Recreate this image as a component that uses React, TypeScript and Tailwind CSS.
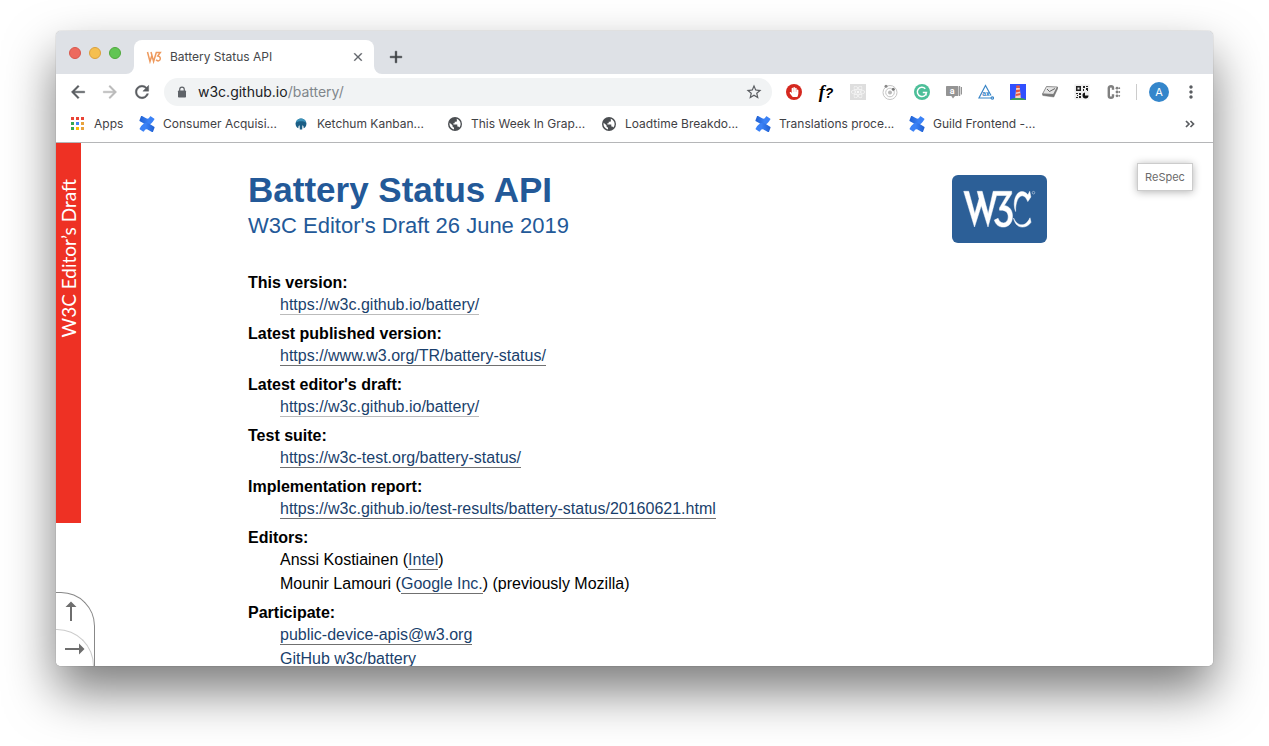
import type { ReactNode } from "react";
import { MdMoreVert, MdStarBorder } from "react-icons/md";
import { FaHandPaper, FaReact } from "react-icons/fa";

const glyphs = {
  back: "M20 11H7.830l5.590-5.590L12 4l-8 8 8 8 1.410-1.410L7.830 13H20v-2z",
  forward: "M12 4l-1.410 1.410L16.170 11H4v2h12.170l-5.580 5.590L12 20l8-8z",
  reload:
    "M17.650 6.350C16.200 4.900 14.210 4 12 4c-4.420 0-7.990 3.580-7.990 8s3.570 8 7.990 8c3.730 0 6.840-2.550 7.730-6h-2.080c-.820 2.330-3.040 4-5.650 4-3.310 0-6-2.690-6-6s2.690-6 6-6c1.660 0 3.140.690 4.220 1.780L13 11h7V4l-2.350 2.350z",
  close:
    "M19 6.410L17.590 5 12 10.590 6.410 5 5 6.410 10.590 12 5 17.590 6.410 19 12 13.410 17.590 19 19 17.590 13.410 12z",
  add: "M19 13h-6v6h-2v-6H5v-2h6V5h2v6h6v2z",
};

function Glyph({ name, className }: { name: keyof typeof glyphs; className: string }) {
  return (
    <svg viewBox="0 0 24 24" className={className} fill="currentColor" stroke="currentColor" strokeWidth="0.500" aria-hidden="true">
      <path d={glyphs[name]} />
    </svg>
  );
}

function ConfluenceIcon() {
  return (
    <svg viewBox="0 0 16 16" className="size-4 shrink-0" aria-hidden="true">
      <defs>
        <linearGradient id="cfTop" x1="0" y1="0" x2="1" y2="0">
          <stop offset="0" stopColor="#1f5fd0" />
          <stop offset="0.6" stopColor="#3b82f6" />
        </linearGradient>
        <linearGradient id="cfBottom" x1="0" y1="0" x2="1" y2="0">
          <stop offset="0.4" stopColor="#3b82f6" />
          <stop offset="1" stopColor="#1f5fd0" />
        </linearGradient>
      </defs>
      <path
        d="M2 .3.500 4.200c-.2.500 0 .9.400 1.100C4.300 7.200 6.200 8.900 8.600 8.900c2.700 0 4.700-1.900 6.700-5.300.3-.5.100-.9-.3-1.200L12 .5c-.5-.3-.9-.1-1.100.3C9.700 2.700 8.800 3 7.100 2.300L3.100.1C2.600-.2 2.200-.1 2 .3Z"
        fill="url(#cfTop)"
      />
      <path
        d="m14 15.700 1.500-3.900c.2-.5 0-.9-.4-1.100C11.700 8.800 9.800 7.100 7.400 7.100 4.700 7.100 2.700 9 .7 12.400c-.3.5-.1.9.3 1.200l3 1.900c.5.3.9.1 1.100-.3 1.200-1.900 2.100-2.200 3.800-1.500l4 2.200c.5.3.9.2 1.100-.2Z"
        fill="url(#cfBottom)"
      />
    </svg>
  );
}

function KetchumIcon() {
  return (
    <svg viewBox="0 0 16 16" className="size-4 shrink-0" aria-hidden="true">
      <path d="M2.700 9A5.400 5.400 0 1 1 13.300 9c-.3 1.500-1.300 2.700-2.600 3.300l-.3-2.300-1-.8-.2 4.300H6.800l-.2-4.300-1 .8-.3 2.300C4 11.700 3 10.500 2.700 9Z" fill="#1b5e85" />
      <path d="M2.800 6.500A5.400 5.400 0 0 1 13.200 6.500C11.600 5.500 10 5.200 8 5.200s-3.600.3-5.200 1.300Z" fill="#3d93ba" />
    </svg>
  );
}

function GlobeIcon() {
  return (
    <svg viewBox="0 0 16 16" className="size-4 shrink-0" aria-hidden="true">
      <circle cx="8" cy="8" r="7" fill="#4b4e52" />
      <path d="M2.600 6.800 5.500 9.300v1.200l1.500 1.300v1.800A5.700 5.700 0 0 1 2.600 6.800Z" fill="#fff" />
      <path d="M9.700 2.700c2.200.7 3.800 2.700 3.900 5 .1 1.500-.4 2.800-1.300 3.800-.2-.7-.7-1.100-1.400-1.100h-.6V8.600H6.400V7.200h1.300V5.800h1.300c.5 0 .9-.4.900-1Z" fill="#fff" />
    </svg>
  );
}

function AppsIcon() {
  const colors = ["#ea4335", "#ea4335", "#ea4335", "#34a853", "#4285f4", "#e8a33d", "#34a853", "#fbbc05", "#e8a33d"];
  return (
    <svg viewBox="0 0 16 16" className="size-4 shrink-0" aria-hidden="true">
      {colors.map((c, i) => (
        <rect key={i} x={1 + (i % 3) * 5} y={1 + Math.floor(i / 3) * 5} width="3" height="3" fill={c} />
      ))}
    </svg>
  );
}

function W3Favicon() {
  return (
    <svg viewBox="0 0 16 16" className="size-4 shrink-0" fill="none" stroke="#ee9a5e" strokeWidth="1.500" aria-hidden="true">
      <path d="M1.500 3 4 12.500 6 6M5 3l2.600 9.500L10.300 3.500h4L11.800 7c1.800.2 2.700 1.300 2.500 3-.2 1.900-2.700 2.700-4.200.8" />
    </svg>
  );
}

const extensions: { name: string; icon: ReactNode }[] = [
  {
    name: "AdBlock",
    icon: (
      <span className="grid size-4 place-items-center rounded-full bg-[#d5281f] text-white">
        <FaHandPaper className="size-2.5" />
      </span>
    ),
  },
  {
    name: "Font finder",
    icon: (
      <span className="font-['Liberation_Serif',serif] text-[18px] leading-4 font-bold text-black">
        <i>f</i>
        <span className="font-['Liberation_Sans',sans-serif] text-[14px] italic">?</span>
      </span>
    ),
  },
  {
    name: "React developer tools",
    icon: (
      <span className="grid size-4 place-items-center bg-[#dedede] text-[#f8f8f8]">
        <FaReact className="size-3.5" />
      </span>
    ),
  },
  {
    name: "Orbit",
    icon: (
      <svg viewBox="0 0 16 16" className="size-4" fill="none" stroke="#c4c4c4">
        <circle cx="8" cy="8.500" r="7" />
        <circle cx="8" cy="8.500" r="4.300" />
        <circle cx="8" cy="8.500" r="2" fill="#b8b8b8" stroke="none" />
        <circle cx="11.300" cy="5.300" r="1.500" fill="#777" stroke="none" />
        <circle cx="4" cy="2.300" r="1.500" fill="#888" stroke="none" />
      </svg>
    ),
  },
  {
    name: "Grammarly",
    icon: (
      <svg viewBox="0 0 16 16" className="size-4" fill="none" stroke="#fff" strokeWidth="1.500">
        <circle cx="8" cy="8" r="8" fill="#4dbf99" stroke="none" />
        <path d="M11.300 4.800a4.600 4.600 0 1 0 1.200 3.700H8.800M12 8.500v2.900" />
      </svg>
    ),
  },
  {
    name: "Alt text",
    icon: (
      <svg viewBox="0 0 16 16" className="size-4" fill="#949494">
        <path d="M1 2h10.500c.6 0 1 .4 1 1v8c0 .6-.4 1-1 1H9l-2 2.500L5.300 12H1c-.6 0-1-.4-1-1V3c0-.6.4-1 1-1Z" />
        <path d="M13 2h1.200v10H13zM14.800 3H16v7.500h-1.200z" />
        <text x="6.200" y="9.800" fontSize="9" fontWeight="700" textAnchor="middle" fill="#fff" fontFamily="Roboto, sans-serif">a</text>
      </svg>
    ),
  },
  {
    name: "axe",
    icon: (
      <svg viewBox="0 0 16 16" className="size-4" fill="none" stroke="#3c87c8" strokeWidth="1.200">
        <path d="M13.500 14H1L7.500 1.500 13 11.500" />
        <circle cx="14.300" cy="14" r="1.200" />
        <text x="7.800" y="12" fontSize="7" fontWeight="700" textAnchor="middle" fill="#3c87c8" stroke="none" fontFamily="Roboto, sans-serif">ax</text>
      </svg>
    ),
  },
  {
    name: "Lighthouse",
    icon: (
      <svg viewBox="0 0 16 16" className="size-4">
        <path d="M0 0h16v16H0z" fill="#304ffe" />
        <path d="M0 16c2-3 14-3 16 0Z" fill="#3f9d55" />
        <path d="M6.200 4h3.600l1 10H5.200Z" fill="#f6d2c4" />
        <path d="M6.200 1.500h3.600V4H6.200zM6 6l4-.5.200 2L5.800 8.500ZM5.700 10l4.700-1 .2 2-5 1Z" fill="#e5563d" />
      </svg>
    ),
  },
  {
    name: "Mail checker",
    icon: (
      <svg viewBox="0 0 16 16" className="size-4" fill="#e4e4e4" stroke="#777" strokeWidth="0.800" strokeLinejoin="round">
        <path d="m4.500 2.500 11 .5-4 7.500L.5 10Z" />
        <path d="m.5 10 .3 1.500L11.800 13l3.900-8.500-.2-1.500-4 7.500Z" fill="#777" strokeWidth="0.500" />
        <path d="m5 5 2.500 2.500 5.500-3" fill="none" stroke="#444" />
      </svg>
    ),
  },
  {
    name: "QR code",
    icon: (
      <svg viewBox="0 0 16 16" className="size-4">
        <path d="M.5.5h15v15H.5z" fill="#eee" />
        <path d="M2 2h5v5H2zM9 2h2v2H9zM12 2h2v1h-2zM9 5h1v2H9zM12 4h2v3h-1V6h-1zM2 9h2v1H2zM5 9h2v2H5zM3 11h1v1H3zM2 13h2v1H2zM5 12h2v2H5z" fill="#222" />
        <path d="M3.500 3.500h2v2h-2z" fill="#eee" />
        <path d="M11 8.500v3h3.500a3 3 0 1 1-3.500-3Z" fill="#111" />
      </svg>
    ),
  },
  {
    name: "Cookie editor",
    icon: (
      <svg viewBox="0 0 16 16" className="size-4" fill="#808080" stroke="none">
        <path d="M7 5.800V4c0-1.100-.7-1.700-2-1.700S2.800 2.900 2.800 4v8c0 1.100.9 1.700 2.200 1.700s2-.6 2-1.700v-1.800" fill="none" stroke="#808080" strokeWidth="2.400" />
        <circle cx="11" cy="4.200" r="1.400" />
        <circle cx="11" cy="8" r="1.400" />
        <circle cx="11" cy="11.800" r="1.400" />
        <circle cx="13.300" cy="4.200" r="0.900" />
        <circle cx="13.300" cy="8" r="0.900" />
        <circle cx="13.300" cy="11.800" r="0.900" />
      </svg>
    ),
  },
];

const bookmarks: { label: string; icon: ReactNode }[] = [
  { label: "Consumer Acquisi...", icon: <ConfluenceIcon /> },
  { label: "Ketchum Kanban...", icon: <KetchumIcon /> },
  { label: "This Week In Grap...", icon: <GlobeIcon /> },
  { label: "Loadtime Breakdo...", icon: <GlobeIcon /> },
  { label: "Translations proce...", icon: <ConfluenceIcon /> },
  { label: "Guild Frontend -...", icon: <ConfluenceIcon /> },
];

function TabStrip() {
  return (
    <div className="flex h-[43px] shrink-0 items-end bg-[#dee1e6]">
      <div className="flex w-[78px] shrink-0 gap-2 self-center pl-[13px]">
        <button aria-label="Close window" className="size-3 rounded-full border border-[#d8574c] bg-[#ed6a5e]" />
        <button aria-label="Minimize window" className="size-3 rounded-full border border-[#dba03c] bg-[#f5bf4f]" />
        <button aria-label="Zoom window" className="size-3 rounded-full border border-[#4fa83c] bg-[#61c554]" />
      </div>
      <div className="relative flex h-[34px] w-60 items-center rounded-t-lg bg-white pr-2 pl-3">
        <svg viewBox="0 0 8 8" className="absolute bottom-0 -left-2 size-2" aria-hidden="true">
          <path d="M8 0v8H0a8 8 0 0 0 8-8Z" fill="#fff" />
        </svg>
        <svg viewBox="0 0 8 8" className="absolute -right-2 bottom-0 size-2" aria-hidden="true">
          <path d="M0 0v8h8a8 8 0 0 1-8-8Z" fill="#fff" />
        </svg>
        <W3Favicon />
        <span className="ml-2 flex-1 text-[12px] text-[#45474a]">Battery Status API</span>
        <button aria-label="Close tab" className="grid size-4 place-items-center text-[#5f6368]">
          <Glyph name="close" className="size-3.5" />
        </button>
      </div>
      <button aria-label="New tab" className="ml-2 grid h-[34px] w-7 place-items-center text-[#3c4043]">
        <Glyph name="add" className="size-5" />
      </button>
    </div>
  );
}

function Toolbar() {
  const nav = "grid h-9 w-8 shrink-0 place-items-center text-[#5a5d61]";
  return (
    <div className="flex h-9 shrink-0 items-center px-1.5">
      <button aria-label="Back" className={nav}>
        <Glyph name="back" className="size-5" />
      </button>
      <button aria-label="Forward" disabled className="grid h-9 w-8 shrink-0 place-items-center text-[#bababa]">
        <Glyph name="forward" className="size-5" />
      </button>
      <button aria-label="Reload" className={nav}>
        <Glyph name="reload" className="size-5" />
      </button>
      <div className="mx-1.5 flex h-7 min-w-0 flex-1 items-center rounded-full bg-[#f1f3f4] pr-[9px] pl-3">
        <svg viewBox="0 0 12 12" className="size-3 shrink-0" aria-hidden="true">
          <path d="M3.700 5V3.500a2.300 2.300 0 0 1 4.600 0V5" fill="none" stroke="#5f6368" strokeWidth="1.200" />
          <rect x="2" y="4.500" width="8" height="7" rx="0.800" fill="#5f6368" />
        </svg>
        <a href="#address" className="ml-2.5 flex-1 truncate pb-px text-[14px] text-[#202124]">
          w3c.github.io<span className="text-[#80868b]">/battery/</span>
        </a>
        <button aria-label="Bookmark this page" className="text-[#5a5d61]">
          <MdStarBorder className="size-[18px]" />
        </button>
      </div>
      {extensions.map((e) => (
        <button key={e.name} aria-label={e.name} className="grid h-9 w-8 shrink-0 place-items-center">{e.icon}</button>
      ))}
      <div className="mx-1.5 h-4 w-px shrink-0 bg-[#ccc]" />
      <button aria-label="Profile" className="grid h-9 w-8 shrink-0 place-items-center">
        <span className="grid size-5 place-items-center rounded-full bg-[#3486cb] text-[11px] text-white">A</span>
      </button>
      <button aria-label="Menu" className={nav}><MdMoreVert className="size-5" /></button>
    </div>
  );
}

function BookmarksBar() {
  return (
    <nav className="flex h-[33px] shrink-0 items-center border-b border-[#b5b6b8] pb-1 pl-3.5 text-[12px] text-[#3f4145]">
      <a href="#apps" className="flex w-[69px] shrink-0 items-center gap-2">
        <AppsIcon />
        Apps
      </a>
      {bookmarks.map((b) => (
        <a key={b.label} href="#bookmark" className="flex w-[154px] shrink-0 items-center gap-2 whitespace-nowrap">
          {b.icon}
          {b.label}
        </a>
      ))}
      <button aria-label="More bookmarks" className="mr-[18px] ml-auto text-[#5a5d61]">
        <svg viewBox="0 0 10 8" className="h-2 w-2.5" fill="none" stroke="currentColor" strokeWidth="1.700">
          <path d="m1 1 3 3-3 3M5.500 1l3 3-3 3" />
        </svg>
      </button>
    </nav>
  );
}

function DocLink({ children, faint = false }: { children: ReactNode; faint?: boolean }) {
  return (
    <a
      href="#link"
      className={faint ? "border-b border-[#bbb] pb-px text-[#1a3f6c]" : "border-b border-[#707070] pb-px text-[#1a3f6c]"}
    >
      {children}
    </a>
  );
}

const entries: { term: string; details: ReactNode[] }[] = [
  { term: "This version:", details: [<DocLink faint>https://w3c.github.io/battery/</DocLink>] },
  { term: "Latest published version:", details: [<DocLink>https://www.w3.org/TR/battery-status/</DocLink>] },
  { term: "Latest editor's draft:", details: [<DocLink faint>https://w3c.github.io/battery/</DocLink>] },
  { term: "Test suite:", details: [<DocLink>https://w3c-test.org/battery-status/</DocLink>] },
  {
    term: "Implementation report:",
    details: [<DocLink>https://w3c.github.io/test-results/battery-status/20160621.html</DocLink>],
  },
  {
    term: "Editors:",
    details: [
      <>Anssi Kostiainen (<DocLink>Intel</DocLink>)</>,
      <>Mounir Lamouri (<DocLink>Google Inc.</DocLink>) (previously Mozilla)</>,
    ],
  },
  {
    term: "Participate:",
    details: [<DocLink>public-device-apis@w3.org</DocLink>, <DocLink>GitHub w3c/battery</DocLink>],
  },
];

function W3CLogo() {
  return (
    <a href="#w3c" aria-label="W3C" className="h-[68px] w-[95px] shrink-0 rounded-md bg-[#2c5f97]">
      <svg viewBox="0 0 95 68" className="size-full" fill="#fff" stroke="#fff" strokeWidth="0.500">
        <path d="M11.700 16.300h5l6.100 22.500 4.300-15-1.900-7.500h5l6 22.500 5-22.500h18.500v2.500l-7.400 11.700c5.400.7 8.200 5.200 8.200 10.700 0 6.500-3.900 10.900-9.200 10.900-4.500 0-7.500-2.500-9-7l3.800-1.800c1 2.900 2.700 4.600 5.200 4.600 2.900 0 4.900-2.500 4.900-6 0-4.600-2.800-6.700-7.200-6.700h-1.500v-2.300l7.300-12.400H44.500L36 52l-6.700-21.500L22.500 52Z" />
        <path d="M77.700 16.300 78.900 22l-3.100 4.600c-1.400-3.500-3.200-5.800-5.600-5.800-3.800 0-6.900 6.600-6.600 15.700-3.600-9.300.2-19.900 6.300-19.900 2.600 0 4.600 1.300 6.100 3.200ZM61.500 43c2.200 4.700 5 6.800 8.400 6.800 3.300 0 5.700-2.200 8.100-7l1 4.500c-2 3-4.900 4.800-8.600 4.800-4.700 0-7.700-3.600-8.900-9.100Z" />
        <circle cx="81.500" cy="17.700" r="1.300" fill="none" strokeOpacity="0.600" strokeWidth="0.700" />
      </svg>
    </a>
  );
}

function Document() {
  return (
    <main className="relative flex min-h-0 flex-1 overflow-hidden bg-white font-['Liberation_Sans',Arial,sans-serif] text-[16px] text-black">
      <div className="mr-px flex h-[380px] w-[25px] shrink-0 justify-center bg-[#ee3124] pt-9">
        <span className="h-fit rotate-180 font-['Lato',sans-serif] text-[19px] leading-[25px] whitespace-nowrap text-white [writing-mode:vertical-rl]">
          W3C Editor’s Draft
        </span>
      </div>
      <div className="min-w-0 flex-1">
        <div className="mx-auto max-w-[799px] pt-7">
          <header className="mb-[23px] flex items-start justify-between">
            <div className="text-[#235998]">
              <h1 className="text-[35px] leading-[38px] font-bold">Battery Status API</h1>
              <h2 className="text-[22px] leading-[34px]">W3C Editor's Draft 26 June 2019</h2>
            </div>
            <div className="flex pt-1">
              <W3CLogo />
            </div>
          </header>
          <dl>
            {entries.map((entry) => (
              <div key={entry.term} className="pt-[7px]">
                <dt className="leading-5 font-bold">{entry.term}</dt>
                {entry.details.map((detail, i) => (
                  <dd key={i} className="ml-8 leading-6">{detail}</dd>
                ))}
              </div>
            ))}
          </dl>
        </div>
      </div>
      <button className="absolute top-5 right-5 h-7 w-14 border border-[#ccc] bg-white font-[Inter,sans-serif] text-[11px] text-[#6b6b6b] shadow-[0_1px_8px_rgba(0,0,0,0.3)]">
        ReSpec
      </button>
      <nav className="absolute bottom-0 left-0 flex w-[39px] flex-col rounded-tr-[34px] border-t border-r border-[#888] bg-white text-[#6e6e6e]">
        <a href="#top" aria-label="Jump to top" className="flex h-9 items-center pl-[5px]">
          <svg viewBox="0 0 20 20" className="size-5" fill="currentColor">
            <path d="M9 20V6H4.500L10 .5 15.500 6H11v14Z" />
          </svg>
        </a>
        <a href="#toc" aria-label="Expand sidebar" className="flex h-[37px] items-center rounded-tr-[37px] border-t border-r border-[#ccc] pt-px pl-[9px]">
          <svg viewBox="0 0 20 20" className="size-5" fill="currentColor">
            <path d="M0 11h14v4.500l5.500-5.500L14 4.500V9H0Z" />
          </svg>
        </a>
      </nav>
    </main>
  );
}

export default function App() {
  return (
    <div className="flex h-screen flex-col overflow-hidden bg-white px-14 pt-[31px] pb-20 font-[Inter,sans-serif]">
      <div className="flex min-h-0 flex-1 flex-col overflow-hidden rounded-[5px] bg-white shadow-[0_0_1px_rgba(0,0,0,0.5),0_25px_50px_rgba(0,0,0,0.52)]">
        <TabStrip />
        <Toolbar />
        <BookmarksBar />
        <Document />
      </div>
    </div>
  );
}
